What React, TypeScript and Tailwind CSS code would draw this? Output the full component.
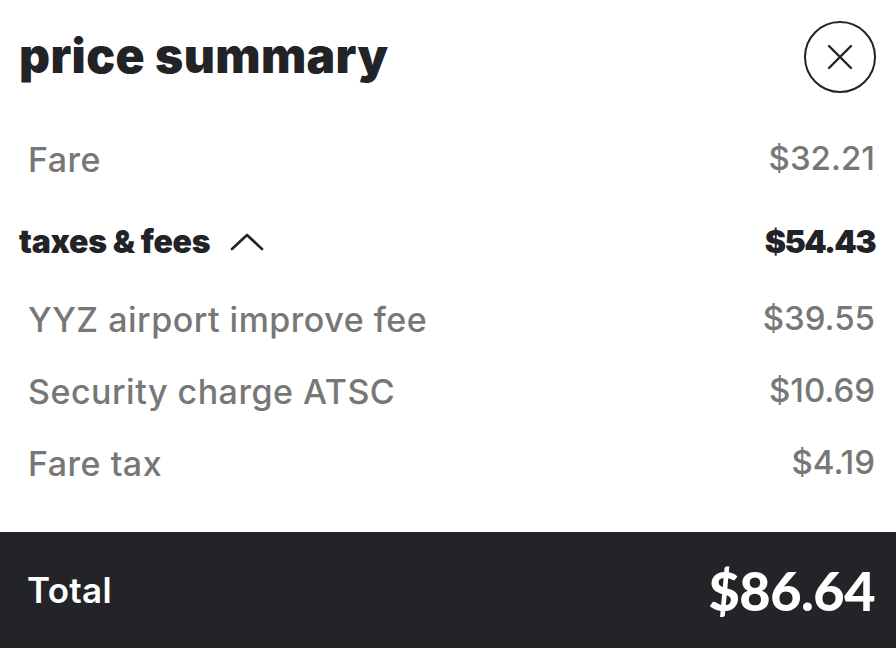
import React from 'react';

const rows = [
  { label: 'YYZ airport improve fee', amount: '$39.55' },
  { label: 'Security charge ATSC', amount: '$10.69' },
  { label: 'Fare tax', amount: '$4.19' },
];

const CloseIcon = () => (
  <svg width="72" height="72" viewBox="0 0 72 72" fill="none">
    <circle cx="36" cy="36" r="35" stroke="#222327" strokeWidth="2" />
    <path d="M25 25 L47 47 M47 25 L25 47" stroke="#222327" strokeWidth="2.4" strokeLinecap="round" />
  </svg>
);

const ChevronUp = () => (
  <svg width="34" height="20" viewBox="0 0 34 20" fill="none">
    <path d="M2 17 L17 3 L32 17" stroke="#222327" strokeWidth="2.6" strokeLinecap="round" strokeLinejoin="round" />
  </svg>
);

export default function App() {
  return (
    <div className="w-[896px] h-[648px] bg-white flex flex-col font-['Inter','Noto_Sans',sans-serif] text-[#222327]">
      <div className="flex-1 flex flex-col">
        {/* header */}
        <div className="flex items-center justify-between pl-[19px] pr-[20px] h-[114px]">
          <h1 className="text-[48px] font-black tracking-[0.4px] leading-none mb-[2px]">price summary</h1>
          <button><CloseIcon /></button>
        </div>

        <div className="flex items-center justify-between pl-[28px] pr-[21px] h-[90px] text-[34px] font-medium text-[#777777]">
          <span className="tracking-[0.5px]">Fare</span>
          <span className="text-[33px]">$32.21</span>
        </div>

        <div className="flex items-center justify-between pl-[19px] pr-[21px] h-[76px] text-[32px] font-black">
          <div className="flex items-center gap-[20px]">
            <span className="tracking-[-0.3px]">taxes &amp; fees</span>
            <ChevronUp />
          </div>
          <span className="tracking-[-1.6px]">$54.43</span>
        </div>

        <div className="flex flex-col mt-[3px] text-[34px] font-medium text-[#777777]">
          {rows.map((r) => (
            <div key={r.label} className="flex items-center justify-between pl-[28px] pr-[21px] h-[72px]">
              <span className="tracking-[0.5px]">{r.label}</span>
              <span className="text-[33px]">{r.amount}</span>
            </div>
          ))}
        </div>
      </div>

      <div className="h-[116px] bg-[#232428] flex items-center justify-between pl-[27px] pr-[21px] text-white">
        <span className="text-[35px] font-semibold tracking-[0.3px]">Total</span>
        <span className="font-['Lato',sans-serif] text-[54px] font-black tracking-[-0.5px]">$86.64</span>
      </div>
    </div>
  );
}
